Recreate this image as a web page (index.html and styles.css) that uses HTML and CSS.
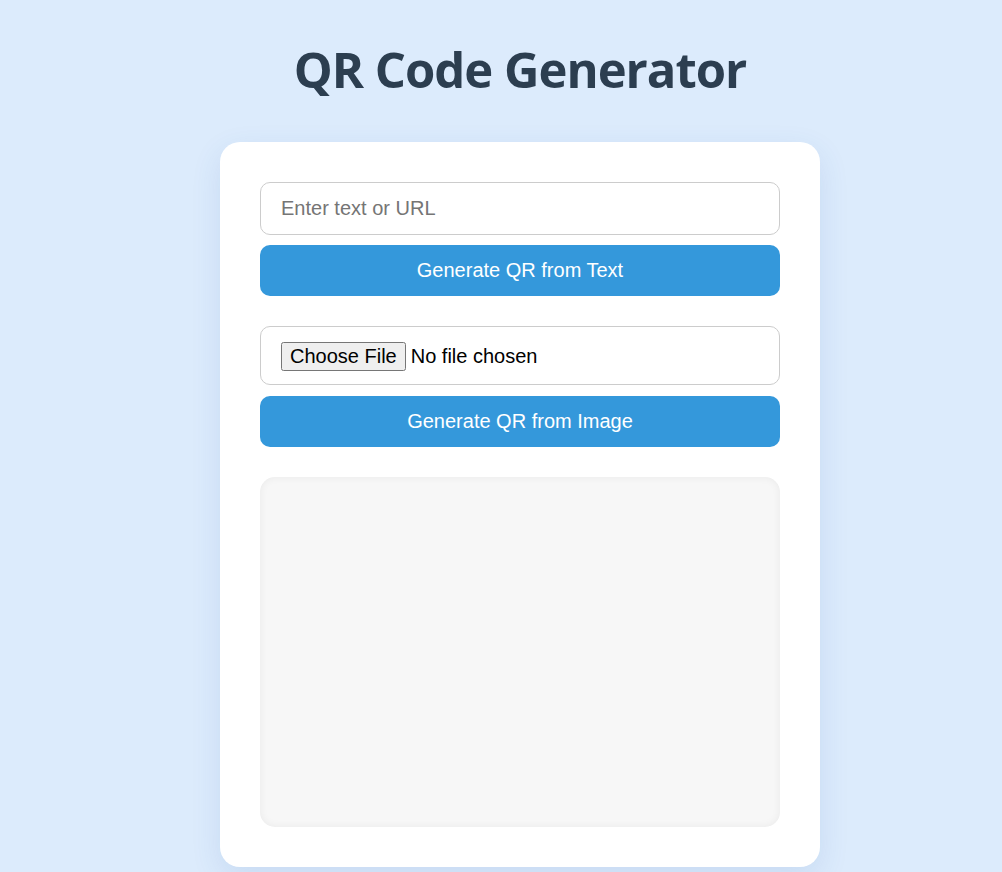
FILE: index.html
```html
<!DOCTYPE html>
<html lang="en">
<head>
<meta charset="utf-8">
<title>QR Code Generator</title>
<link rel="stylesheet" href="styles.css">
</head>
<body>
<main class="page">
  <h1 class="title">QR Code Generator</h1>
  <div class="card">
    <input class="text-input" type="text" placeholder="Enter text or URL">
    <button class="btn">Generate QR from Text</button>
    <input class="file-input" type="file">
    <button class="btn">Generate QR from Image</button>
    <div class="qr-box"></div>
  </div>
</main>
</body>
</html>
```

FILE: styles.css
```css
html, body {
  margin: 0;
  padding: 0;
}
body {
  background: #dcebfc;
  font-family: "Liberation Sans", Arial, sans-serif;
  min-height: 872px;
}
.page {
  padding-left: 38px;
  display: flex;
  flex-direction: column;
  align-items: center;
}
.title {
  font-family: "Open Sans", "Noto Sans", sans-serif;
  font-weight: 700;
  font-size: 49px;
  color: #2c3e50;
  margin: 36px 0 40px;
  line-height: normal;
  letter-spacing: -1px;
}
.card {
  width: 600px;
  box-sizing: border-box;
  background: #fff;
  border-radius: 20px;
  padding: 40px;
  display: flex;
  flex-direction: column;
  box-shadow: 0 10px 30px rgba(52, 100, 170, 0.12);
}
.text-input, .file-input {
  box-sizing: border-box;
  width: 100%;
  font-family: "Liberation Sans", Arial, sans-serif;
  font-size: 20px;
  padding: 0 20px;
  border: 1px solid #ccc;
  border-radius: 10px;
  background: #fff;
  color: #000;
  outline: none;
}
.text-input {
  height: 53px;
}
.text-input::placeholder {
  color: #757575;
}
.file-input {
  margin-top: 30px;
  height: 59px;
  padding: 15px 20px;
}
.file-input::file-selector-button {
  font-family: "Liberation Sans", Arial, sans-serif;
  font-size: 20px;
  margin-right: 5px;
  padding: 1px 7px;
}
.btn {
  margin-top: 10px;
  height: 51px;
  width: 100%;
  border: none;
  border-radius: 10px;
  background: #3498db;
  color: #fff;
  font-family: "Liberation Sans", Arial, sans-serif;
  font-size: 20px;
  cursor: pointer;
}
.file-input + .btn {
  margin-top: 11px;
}
.qr-box {
  margin-top: 30px;
  height: 350px;
  background: #f7f7f7;
  border-radius: 15px;
  box-shadow: inset 0 0 8px rgba(0, 0, 0, 0.06);
}
```
